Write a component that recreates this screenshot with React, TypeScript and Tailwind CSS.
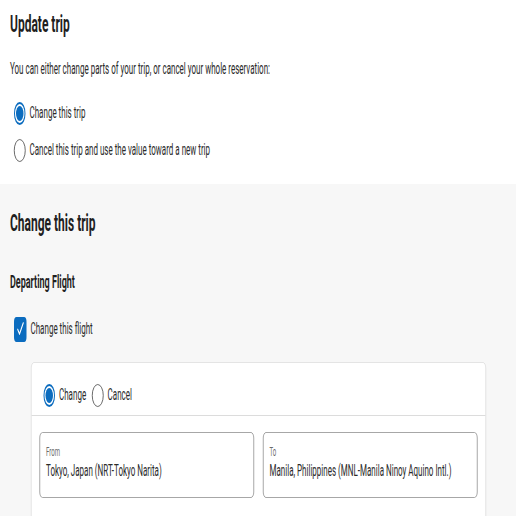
import React from 'react';

const Radio = ({ checked }: { checked?: boolean }) => (
  <span
    className={`flex h-[23px] w-[23px] shrink-0 items-center justify-center rounded-full ${
      checked ? 'border-2 border-[#0b6cbf] p-[2px]' : 'border-[1.5px] border-[#3a3a3a]'
    }`}
  >
    {checked && <span className="h-full w-full rounded-full bg-[#0b6cbf]" />}
  </span>
);

const Checkbox = () => (
  <span className="flex h-[25px] w-[25px] shrink-0 items-center justify-center rounded-[5px] bg-[#0b6cbf]">
    <svg width="16" height="16" viewBox="0 0 16 16" fill="none">
      <path d="M2.5 8.5 L6 13 L13.5 2" stroke="white" strokeWidth="2" strokeLinecap="round" strokeLinejoin="round" />
    </svg>
  </span>
);

const Field = ({ label, value }: { label: string; value: string }) => (
  <div className="flex h-[66px] flex-1 flex-col rounded-[6px] border border-[#8a8a8a] px-3 pt-[12px]">
    <span className="text-[12px] leading-[14px] text-[#6b6b6b]">{label}</span>
    <span className="mt-[2px] text-[16px] leading-[20px] text-[#2a2a2a]">{value}</span>
  </div>
);

export default function App() {
  return (
    <div className="h-[516px] w-[516px] overflow-hidden bg-white" style={{ fontFamily: 'Roboto, "Liberation Sans", sans-serif' }}>
      <div className="w-[1032px] origin-top-left scale-x-50 text-[#2a2a2a]">
        {/* Update trip */}
        <section className="bg-white px-5 pt-2 pb-[22px]">
          <h2 className="text-[24px] font-bold leading-[32px] text-[#1f1f1f]">Update trip</h2>
          <p className="mt-[19px] text-[16px] leading-[20px]">
            You can either change parts of your trip, or cancel your whole reservation:
          </p>
          <div className="mt-[22px] flex flex-col gap-[13px] pl-2">
            <label className="flex h-6 items-center gap-2 text-[16px]">
              <Radio checked />
              Change this trip
            </label>
            <label className="flex h-6 items-center gap-2 text-[16px]">
              <Radio />
              Cancel this trip and use the value toward a new trip
            </label>
          </div>
        </section>

        {/* Change this trip */}
        <section className="min-h-[400px] bg-[#f7f7f7] px-5 pt-[23px]">
          <h2 className="text-[24px] font-bold leading-[32px] text-[#1f1f1f]">Change this trip</h2>
          <h3 className="mt-[31px] text-[18px] font-bold leading-[24px] text-[#1f1f1f]">Departing Flight</h3>
          <label className="mt-[23px] flex h-6 items-center gap-2 pl-2 text-[16px]">
            <Checkbox />
            Change this flight
          </label>

          <div className="mt-[21px] mr-[40px] ml-[42px] rounded-[6px] border border-[#dcdcdc] bg-white pb-6">
            <div className="flex items-center gap-2 border-b border-[#dcdcdc] px-6 pt-5 pb-2">
              <label className="flex h-6 items-center gap-2 text-[16px]">
                <Radio checked />
                Change
              </label>
              <label className="ml-1 flex h-6 items-center gap-2 text-[16px]">
                <Radio />
                Cancel
              </label>
            </div>
            <div className="flex gap-[18px] px-4 pt-[16px]">
              <Field label="From" value="Tokyo, Japan (NRT-Tokyo Narita)" />
              <Field label="To" value="Manila, Philippines (MNL-Manila Ninoy Aquino Intl.)" />
            </div>
          </div>
        </section>
      </div>
    </div>
  );
}
